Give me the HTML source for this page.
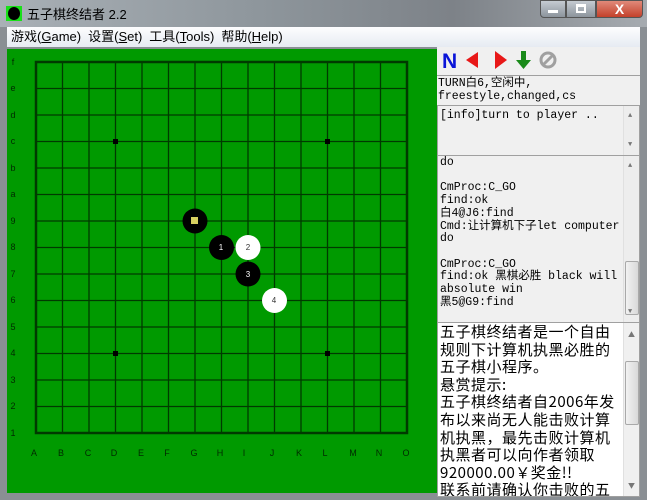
<!DOCTYPE html>
<html><head><meta charset="utf-8"><style>
*{margin:0;padding:0;box-sizing:border-box}
body{width:647px;height:500px;overflow:hidden;background:#8a8f94;position:relative;font-family:"Liberation Sans","Noto Sans CJK SC",sans-serif}
.title{position:absolute;left:0;top:0;width:647px;height:27px;background:linear-gradient(90deg,#a9b0b6,#8e969c 40%,#7d8288 70%,#a6abb0)}
.menu{position:absolute;left:7px;top:27px;width:633px;height:20px;background:linear-gradient(#fdfdfe,#e6ebf2);font-size:13px;color:#000;line-height:20px}
.mono{font-family:"Liberation Mono","Noto Sans CJK SC",monospace}
.box{position:absolute;background:#f0f0f0;border:1px solid #a0a0a0}
.sb{position:absolute;right:0;top:0;bottom:0;width:16px;background:#ededed;border-left:1px solid #e0e0e0}
.thumb{position:absolute;left:1px;width:14px;background:linear-gradient(90deg,#f2f2f2,#d8d8d8);border:1px solid #a9a9a9;border-radius:2px}
</style></head><body>
<div class="title">
 <div style="position:absolute;left:6px;top:6px;width:16px;height:15px;background:#19e019"></div>
 <div style="position:absolute;left:8px;top:7px;width:12px;height:13px;border-radius:50%;background:#000"></div>
 <div style="position:absolute;left:27px;top:4px;font-size:13px;color:#000">五子棋终结者 2.2</div>
 <div style="position:absolute;left:540px;top:0;width:26px;height:18px;background:linear-gradient(#c5cbd2,#8c949c);border:1px solid #555;border-radius:0 0 0 4px"></div>
 <div style="position:absolute;left:548px;top:10px;width:10px;height:3px;background:#fff"></div>
 <div style="position:absolute;left:566px;top:0;width:30px;height:18px;background:linear-gradient(#c5cbd2,#8c949c);border:1px solid #555"></div>
 <div style="position:absolute;left:576px;top:4px;width:10px;height:9px;border:2px solid #fff;border-top-width:3px"></div>
 <div style="position:absolute;left:596px;top:0;width:47px;height:18px;background:linear-gradient(#e08a7a,#c4412b);border:1px solid #555;border-radius:0 0 4px 0;color:#fff;font-weight:bold;font-size:14px;text-align:center;line-height:17px">X</div>
</div>
<div class="menu"><span style="margin-left:4px">游戏(<u>G</u>ame)</span><span style="margin-left:7px">设置(<u>S</u>et)</span><span style="margin-left:7px">工具(<u>T</u>ools)</span><span style="margin-left:7px">帮助(<u>H</u>elp)</span></div>
<svg style="position:absolute;left:7px;top:49px" width="430" height="444" viewBox="7 49 430 444">
<rect x="7" y="49" width="430" height="444" fill="#009a00"/>
<g stroke="#003a00" stroke-width="1.3">
<line x1="36" y1="88.5" x2="407" y2="88.5"/><line x1="36" y1="115" x2="407" y2="115"/><line x1="36" y1="141.5" x2="407" y2="141.5"/><line x1="36" y1="168" x2="407" y2="168"/><line x1="36" y1="194.5" x2="407" y2="194.5"/><line x1="36" y1="221" x2="407" y2="221"/><line x1="36" y1="247.5" x2="407" y2="247.5"/><line x1="36" y1="274" x2="407" y2="274"/><line x1="36" y1="300.5" x2="407" y2="300.5"/><line x1="36" y1="327" x2="407" y2="327"/><line x1="36" y1="353.5" x2="407" y2="353.5"/><line x1="36" y1="380" x2="407" y2="380"/><line x1="36" y1="406.5" x2="407" y2="406.5"/>
<line y1="62" y2="433" x1="62.5" x2="62.5"/><line y1="62" y2="433" x1="89" x2="89"/><line y1="62" y2="433" x1="115.5" x2="115.5"/><line y1="62" y2="433" x1="142" x2="142"/><line y1="62" y2="433" x1="168.5" x2="168.5"/><line y1="62" y2="433" x1="195" x2="195"/><line y1="62" y2="433" x1="221.5" x2="221.5"/><line y1="62" y2="433" x1="248" x2="248"/><line y1="62" y2="433" x1="274.5" x2="274.5"/><line y1="62" y2="433" x1="301" x2="301"/><line y1="62" y2="433" x1="327.5" x2="327.5"/><line y1="62" y2="433" x1="354" x2="354"/><line y1="62" y2="433" x1="380.5" x2="380.5"/>
</g>
<rect x="36" y="62" width="371" height="371" fill="none" stroke="#003a00" stroke-width="2.5"/>
<g fill="#000"><rect x="113" y="139" width="5" height="5"/><rect x="325" y="139" width="5" height="5"/><rect x="113" y="351" width="5" height="5"/><rect x="325" y="351" width="5" height="5"/></g>
<g font-family="Liberation Sans" font-size="9" fill="#002a00" text-anchor="middle">
<text x="13" y="65">f</text><text x="13" y="91">e</text><text x="13" y="118">d</text><text x="13" y="144">c</text><text x="13" y="171">b</text><text x="13" y="197">a</text><text x="13" y="224">9</text><text x="13" y="250">8</text><text x="13" y="277">7</text><text x="13" y="303">6</text><text x="13" y="330">5</text><text x="13" y="356">4</text><text x="13" y="383">3</text><text x="13" y="409">2</text><text x="13" y="436">1</text>
<text x="34" y="456">A</text><text x="61" y="456">B</text><text x="88" y="456">C</text><text x="114" y="456">D</text><text x="141" y="456">E</text><text x="167" y="456">F</text><text x="194" y="456">G</text><text x="220" y="456">H</text><text x="244" y="456">I</text><text x="272" y="456">J</text><text x="299" y="456">K</text><text x="325" y="456">L</text><text x="353" y="456">M</text><text x="379" y="456">N</text><text x="406" y="456">O</text>
</g>
<circle cx="195" cy="221" r="12.5" fill="#000"/><rect x="191" y="217" width="7" height="7" fill="#d8d060"/>
<circle cx="221.5" cy="247.5" r="12.5" fill="#000"/><circle cx="248" cy="247.5" r="12.5" fill="#fff"/>
<circle cx="248" cy="274" r="12.5" fill="#000"/><circle cx="274.5" cy="300.5" r="12.5" fill="#fff"/>
<g font-family="Liberation Sans" font-size="8" text-anchor="middle"><text x="221" y="250" fill="#fff">1</text><text x="248" y="250" fill="#333">2</text><text x="248" y="277" fill="#fff">3</text><text x="274" y="303" fill="#333">4</text></g>
</svg>
<div style="position:absolute;left:437px;top:47px;width:203px;height:449px;background:#f0f0f0"></div>
<svg style="position:absolute;left:437px;top:47px" width="140" height="28">
<text x="5" y="21" font-family="Liberation Sans" font-weight="bold" font-size="21" fill="#0a14d8">N</text>
<polygon points="29,13 41,5 41,21" fill="#e81818"/>
<polygon points="58,4 70,13 58,22" fill="#e81818"/>
<polygon points="84,4 89,4 89,13 94,13 86.5,22 79,13 84,13" fill="#1a8a1a"/>
<circle cx="111" cy="13" r="7" fill="none" stroke="#a0a0a0" stroke-width="3"/><line x1="106" y1="18" x2="116" y2="8" stroke="#a0a0a0" stroke-width="3"/>
</svg>
<div class="box mono" style="left:437px;top:75px;width:203px;height:31px;font-size:11.5px;line-height:13px;padding:1px 1px;border-width:1px 0">TURN白6,空闲中,<br>freestyle,changed,cs</div>
<div class="box mono" style="left:437px;top:105px;width:203px;height:51px;font-size:11.5px;line-height:13px;padding:3px 2px">[info]turn to player ..<div class="sb"><div style="position:absolute;top:4px;left:4px;font-size:7px;color:#777">▲</div><div style="position:absolute;bottom:3px;left:4px;font-size:7px;color:#777">▼</div></div></div>
<div class="box mono" style="left:437px;top:155px;width:203px;height:168px;font-size:11.5px;line-height:12.7px;padding:1px 2px;white-space:pre">do

CmProc:C_GO
find:ok
白4@J6:find
Cmd:让计算机下子let computer
do

CmProc:C_GO
find:ok 黑棋必胜 black will
absolute win
黑5@G9:find<div class="sb"><div style="position:absolute;top:4px;left:4px;font-size:7px;color:#777">▲</div><div class="thumb" style="top:105px;height:54px"></div><div style="position:absolute;bottom:3px;left:4px;font-size:7px;color:#777">▼</div></div></div>
<div class="box" style="left:437px;top:322px;width:203px;height:175px;background:#fff;font-family:'Noto Sans CJK SC',sans-serif;font-size:15px;letter-spacing:0.5px;line-height:17.6px;padding:0 2px;overflow:hidden;white-space:nowrap">五子棋终结者是一个自由<br>规则下计算机执黑必胜的<br>五子棋小程序。<br>悬赏提示:<br>五子棋终结者自2006年发<br>布以来尚无人能击败计算<br>机执黑，最先击败计算机<br>执黑者可以向作者领取<br>920000.00￥奖金!!<br>联系前请确认你击败的五<div class="sb" style="background:#f0f0f0"><div style="position:absolute;top:4px;left:4px;font-size:7px;color:#777">▲</div><div class="thumb" style="top:38px;height:64px"></div><div style="position:absolute;bottom:0;left:4px;font-size:7px;color:#777">▼</div></div></div>
</body></html>
